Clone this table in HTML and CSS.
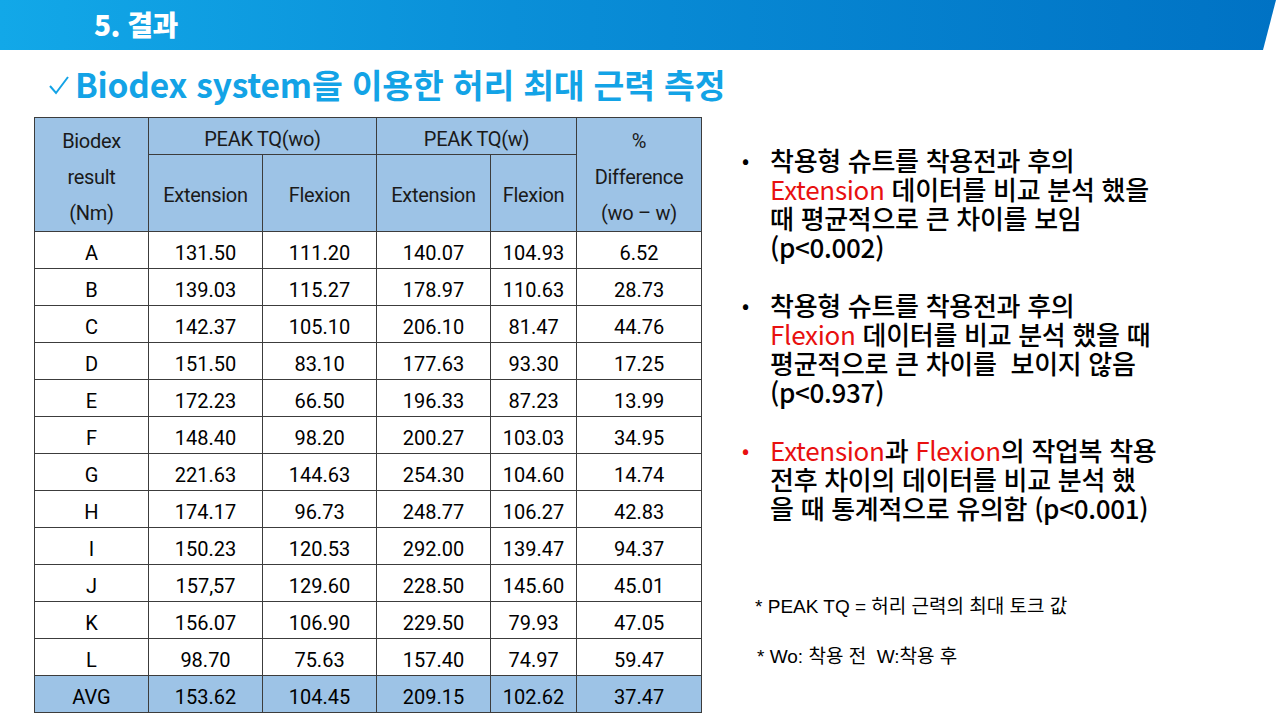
FILE: index.html
```html
<!DOCTYPE html>
<html lang="ko">
<head>
<meta charset="utf-8">
<link rel="stylesheet" href="styles.css">
</head>
<body>
<header class="topbar"><h1 class="section">5. 결과</h1></header>
<h2 class="title"><svg class="check" viewBox="0 0 22 22" width="22" height="22"><polyline points="2,12 8,19 20,3" fill="none" stroke="#13a3e6" stroke-width="2"/></svg>Biodex system을 이용한 허리 최대 근력 측정</h2>
<main class="content">
  <table class="data">
    <colgroup>
      <col class="w114"><col class="w114"><col class="w114"><col class="w114"><col class="w86"><col class="w125">
    </colgroup>
    <thead>
      <tr class="h1">
        <th rowspan="2" class="tall">Biodex<br>result<br>(Nm)</th>
        <th colspan="2">PEAK TQ(wo)</th>
        <th colspan="2">PEAK TQ(w)</th>
        <th rowspan="2" class="tall">%<br>Difference<br>(wo – w)</th>
      </tr>
      <tr class="h2">
        <th>Extension</th><th>Flexion</th><th>Extension</th><th>Flexion</th>
      </tr>
    </thead>
    <tbody>
      <tr><td>A</td><td>131.50</td><td>111.20</td><td>140.07</td><td>104.93</td><td>6.52</td></tr>
      <tr><td>B</td><td>139.03</td><td>115.27</td><td>178.97</td><td>110.63</td><td>28.73</td></tr>
      <tr><td>C</td><td>142.37</td><td>105.10</td><td>206.10</td><td>81.47</td><td>44.76</td></tr>
      <tr><td>D</td><td>151.50</td><td>83.10</td><td>177.63</td><td>93.30</td><td>17.25</td></tr>
      <tr><td>E</td><td>172.23</td><td>66.50</td><td>196.33</td><td>87.23</td><td>13.99</td></tr>
      <tr><td>F</td><td>148.40</td><td>98.20</td><td>200.27</td><td>103.03</td><td>34.95</td></tr>
      <tr><td>G</td><td>221.63</td><td>144.63</td><td>254.30</td><td>104.60</td><td>14.74</td></tr>
      <tr><td>H</td><td>174.17</td><td>96.73</td><td>248.77</td><td>106.27</td><td>42.83</td></tr>
      <tr><td>I</td><td>150.23</td><td>120.53</td><td>292.00</td><td>139.47</td><td>94.37</td></tr>
      <tr><td>J</td><td>157,57</td><td>129.60</td><td>228.50</td><td>145.60</td><td>45.01</td></tr>
      <tr><td>K</td><td>156.07</td><td>106.90</td><td>229.50</td><td>79.93</td><td>47.05</td></tr>
      <tr><td>L</td><td>98.70</td><td>75.63</td><td>157.40</td><td>74.97</td><td>59.47</td></tr>
      <tr class="avg"><td>AVG</td><td>153.62</td><td>104.45</td><td>209.15</td><td>102.62</td><td>37.47</td></tr>
    </tbody>
  </table>
  <section class="side">
    <ul class="points">
      <li>착용형 슈트를 착용전과 후의<br><span class="red">Extension</span> 데이터를 비교 분석 했을<br>때 평균적으로 큰 차이를 보임<br>(p&lt;0.002)</li>
      <li>착용형 슈트를 착용전과 후의<br><span class="red">Flexion</span> 데이터를 비교 분석 했을 때<br>평균적으로 큰 차이를&nbsp; 보이지 않음<br>(p&lt;0.937)</li>
      <li class="redbullet"><span class="red">Extension</span>과 <span class="red">Flexion</span>의 작업복 착용<br>전후 차이의 데이터를 비교 분석 했<br>을 때 통계적으로 유의함 (p&lt;0.001)</li>
    </ul>
    <p class="note n1">* PEAK TQ = 허리 근력의 최대 토크 값</p>
    <p class="note n2">* Wo: 착용 전&nbsp; W:착용 후</p>
  </section>
</main>
</body>
</html>
```
FILE: styles.css
```css
html, body { margin: 0; padding: 0; background: #fff; }
body { width: 1280px; height: 720px; overflow: hidden; font-family: "Noto Sans CJK KR", "Noto Sans", sans-serif; }

.topbar {
  height: 50px;
  background: linear-gradient(90deg, #12a8e8 0%, #0a8fd8 40%, #0072c4 100%);
  clip-path: polygon(0 0, 1276px 0, 1263px 50px, 0 50px);
  display: flex;
  align-items: center;
}
.section {
  margin: 0 0 0 94px;
  color: #fff;
  font-family: "Noto Sans CJK KR", sans-serif;
  font-weight: 900;
  font-size: 28px;
  line-height: 1;
  letter-spacing: -0.5px;
  padding-bottom: 3px;
}

.title {
  margin: 0;
  height: 67px;
  display: flex;
  align-items: center;
  padding-left: 48px;
  color: #13a3e6;
  font-family: "Noto Sans CJK KR", sans-serif;
  font-weight: 700;
  font-size: 33.5px;
  letter-spacing: -0.2px;
}
.check { margin-right: 5px; margin-top: 2px; }

.content {
  display: flex;
  align-items: flex-start;
  padding-left: 34px;
}

.data {
  border-collapse: collapse;
  font-family: Roboto, "Noto Sans", sans-serif;
  font-size: 20px;
  color: #000;
  table-layout: fixed;
  width: 667px;
}
.w114 { width: 114px; }
.w86 { width: 86px; }
.w125 { width: 125px; }
.data th, .data td {
  border: 1px solid #3c3c3c;
  text-align: center;
  padding: 0;
  font-weight: 400;
}
.data th {
  background: #9dc3e6;
  color: #1a1a1a;
  font-size: 20px;
  letter-spacing: -0.3px;
}
.h1 th { height: 30px; padding-top: 6px; }
.h2 th { height: 73px; padding-top: 3px; }
.data th.tall { line-height: 36px; padding-top: 5px; height: auto; vertical-align: top; }
.data td { height: 30px; padding-top: 6px; }
.avg td { background: #9dc3e6; }

.side {
  margin-left: 40px;
  padding-top: 28px;
  display: flex;
  flex-direction: column;
}
.points {
  margin: 0;
  padding: 0 0 0 28px;
  list-style: none;
  font-size: 26px;
  line-height: 29px;
  color: #000;
  font-weight: 500;
  letter-spacing: -0.3px;
}
.points li { position: relative; white-space: nowrap; margin-bottom: 29px; }
.points li::before {
  content: "•";
  position: absolute;
  left: -28px;
  top: 0;
  font-size: 20px;
  color: #000;
}
.points li.redbullet::before { color: #e81010; }
.red { color: #e81010; font-weight: 400; }

.note {
  margin: 0;
  font-family: "Liberation Sans", "Noto Sans CJK KR", sans-serif;
  font-size: 19px;
  color: #000;
  line-height: 22px;
}
.n1 { margin-top: 45px; padding-left: 13px; }
.n2 { margin-top: 28px; padding-left: 15px; }
```
